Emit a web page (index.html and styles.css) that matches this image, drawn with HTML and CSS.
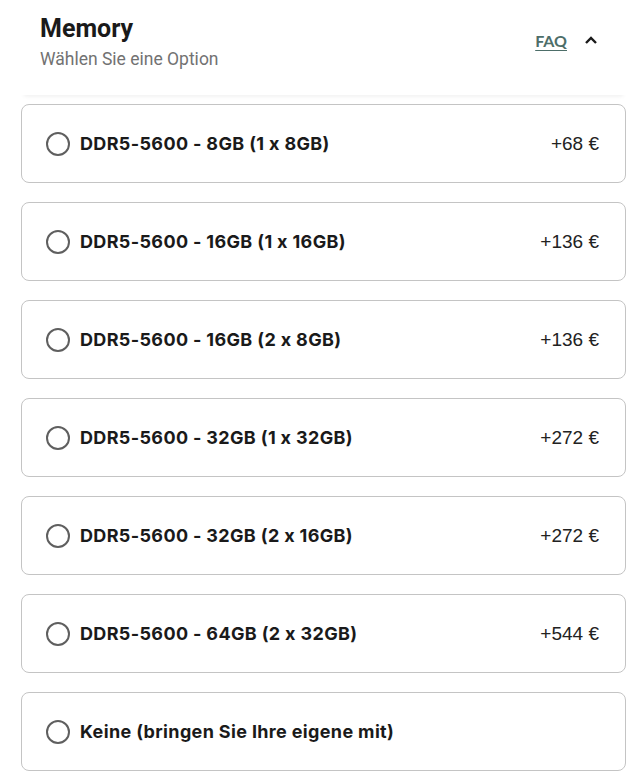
FILE: index.html
```html
<!DOCTYPE html>
<html>
<head>
<meta charset="utf-8">
<link rel="stylesheet" href="styles.css">
</head>
<body>
<div class="section">
  <div class="header">
    <div class="titles">
      <div class="title">Memory</div>
      <div class="subtitle">Wählen Sie eine Option</div>
    </div>
    <div class="actions">
      <a class="faq" href="#">FAQ</a>
      <svg class="chev" width="14" height="10" viewBox="0 0 14 10"><path d="M2 8 L7 3 L12 8" fill="none" stroke="#1a1a1a" stroke-width="2.4"/></svg>
    </div>
  </div>
  <div class="divider"></div>
  <div class="options">
    <label class="option"><span class="radio"></span><span class="name">DDR5-5600 - 8GB (1 x 8GB)</span><span class="price">+68 €</span></label>
    <label class="option"><span class="radio"></span><span class="name">DDR5-5600 - 16GB (1 x 16GB)</span><span class="price">+136 €</span></label>
    <label class="option"><span class="radio"></span><span class="name">DDR5-5600 - 16GB (2 x 8GB)</span><span class="price">+136 €</span></label>
    <label class="option"><span class="radio"></span><span class="name">DDR5-5600 - 32GB (1 x 32GB)</span><span class="price">+272 €</span></label>
    <label class="option"><span class="radio"></span><span class="name">DDR5-5600 - 32GB (2 x 16GB)</span><span class="price">+272 €</span></label>
    <label class="option"><span class="radio"></span><span class="name">DDR5-5600 - 64GB (2 x 32GB)</span><span class="price">+544 €</span></label>
    <label class="option"><span class="radio"></span><span class="name">Keine (bringen Sie Ihre eigene mit)</span><span class="price"></span></label>
  </div>
</div>
</body>
</html>
```
FILE: styles.css
```css
* { box-sizing: border-box; }
body {
  margin: 0;
  background: #fff;
  font-family: "Roboto", "Liberation Sans", sans-serif;
  color: #1a1a1a;
}
.section {
  padding: 13px 14px 0 21px;
  width: 640px;
}
.header {
  display: flex;
  justify-content: space-between;
  align-items: center;
  padding: 0 28px 0 19px;
}
.title {
  font-size: 25px;
  font-weight: 700;
  line-height: 32px;
  color: #1a1a1a;
}
.subtitle {
  font-size: 17.5px;
  color: #727272;
  line-height: 26px;
  margin-top: 1px;
}
.actions {
  display: flex;
  align-items: center;
  gap: 17px;
  margin-top: -5px;
}
.faq {
  font-family: "Lato", sans-serif;
  font-weight: 700;
  font-size: 16px;
  color: #4d6e69;
  text-decoration: underline;
  text-underline-offset: 3px;
}
.chev { display: block; }
.divider {
  height: 10px;
  margin-top: 13px;
  box-shadow: 0 4px 4px -3px rgba(0,0,0,0.08);
}
.options {
  display: flex;
  flex-direction: column;
  gap: 19px;
  margin-top: 9px;
  width: 605px;
}
.option {
  display: flex;
  align-items: center;
  height: 79px;
  border: 1px solid #c4c4c4;
  border-radius: 8px;
  padding: 0 26px 0 24px;
  background: #fff;
}
.radio {
  width: 24px;
  height: 24px;
  border: 2px solid #5f5f5f;
  border-radius: 50%;
  flex: none;
  margin-right: 10px;
}
.name {
  font-family: "Inter", sans-serif;
  font-feature-settings: "calt" 0;
  font-weight: 700;
  font-size: 18px;
  letter-spacing: 0.35px;
  color: #1a1a1a;
  flex: 1;
}
.price {
  font-family: "Liberation Sans", sans-serif;
  font-size: 19px;
  color: #222;
}
```
